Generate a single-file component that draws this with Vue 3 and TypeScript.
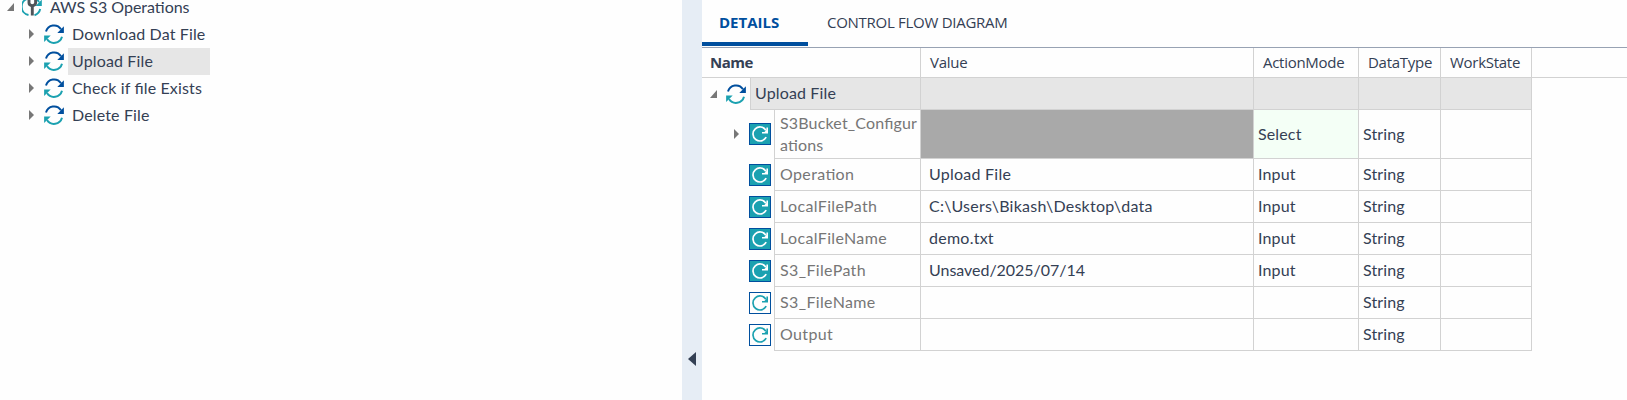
<script setup lang="ts">
interface Row {
  name: string
  value: string
  mode: string
  filled: boolean
  expandable?: boolean
}

const steps: string[] = ['Download Dat File', 'Upload File', 'Check if file Exists', 'Delete File']
const selected = 'Upload File'

const rows: Row[] = [
  { name: 'S3Bucket_Configurations', value: '', mode: 'Select', filled: true, expandable: true },
  { name: 'Operation', value: 'Upload File', mode: 'Input', filled: true },
  { name: 'LocalFilePath', value: 'C:\\Users\\Bikash\\Desktop\\data', mode: 'Input', filled: true },
  { name: 'LocalFileName', value: 'demo.txt', mode: 'Input', filled: true },
  { name: 'S3_FilePath', value: 'Unsaved/2025/07/14', mode: 'Input', filled: true },
  { name: 'S3_FileName', value: '', mode: '', filled: false },
  { name: 'Output', value: '', mode: '', filled: false },
]
</script>

<template>
  <svg class="defs" width="0" height="0" aria-hidden="true">
    <symbol id="sync" viewBox="0 0 20 20">
      <path d="M2 7.6A8.3 8.3 0 0 1 17 5.3" fill="none" stroke="#004f9e" stroke-width="2" />
      <path d="M19.9 2.2V9H13.3Z" fill="#004f9e" />
      <path d="M18 12.8A8.3 8.3 0 0 1 3 15" fill="none" stroke="#1ba1b0" stroke-width="2" />
      <path d="M0.1 18V11.4H6.7Z" fill="#1ba1b0" />
    </symbol>
    <symbol id="reload" viewBox="0 0 20 20">
      <path d="M15.9 6.2A7 7 0 1 0 16.2 13.2" fill="none" stroke="currentColor" stroke-width="1.7" />
      <path d="M18 3.6V9.4H12V8H14.4L16.4 6V3.6Z" fill="currentColor" />
    </symbol>
    <symbol id="closed" viewBox="0 0 5 10"><path d="M0 0L5 5L0 10Z" fill="#777" /></symbol>
    <symbol id="open" viewBox="0 0 7 8"><path d="M7 0V8H0Z" fill="#777" /></symbol>
  </svg>
  <main class="app">
    <aside class="tree">
      <div class="node root">
        <svg class="open"><use href="#open" /></svg>
        <svg class="tool" viewBox="0 0 20 20">
          <path d="M6 1.6A8.4 8.4 0 0 0 6.5 18" fill="none" stroke="#1ba1b0" stroke-width="2" />
          <path d="M12.5 18.2A8.6 8.6 0 0 0 18.2 12M13.5 1.6A9 9 0 0 1 17 5" fill="none" stroke="#1ba1b0" stroke-width="2" />
          <path d="M19.8 2.6V9H13.5Z" fill="#1ba1b0" />
          <path d="M7 2V6Q7 8 10.3 9Q13.6 8 13.6 6V2M10.3 8V18.5" fill="none" stroke="#505459" stroke-width="2.9" />
        </svg>
        <span class="label">AWS S3 Operations</span>
      </div>
      <div v-for="s in steps" :key="s" class="node">
        <svg class="closed"><use href="#closed" /></svg>
        <svg class="sync"><use href="#sync" /></svg>
        <span class="label" :class="{ selected: s === selected }">{{ s }}</span>
      </div>
    </aside>

    <div class="splitter">
      <svg width="8" height="14" viewBox="0 0 8 14"><path d="M8 0V14L0 7Z" fill="#344054" /></svg>
    </div>

    <section class="panel">
      <nav class="tabs">
        <span class="tab active">DETAILS</span>
        <span class="tab">CONTROL FLOW DIAGRAM</span>
      </nav>
      <div class="row head">
        <div class="cell name">Name</div>
        <div class="cell">Value</div>
        <div class="cell">ActionMode</div>
        <div class="cell">DataType</div>
        <div class="cell">WorkState</div>
        <div class="rest"></div>
      </div>
      <div class="row group">
        <div class="gutter">
          <svg class="open"><use href="#open" /></svg>
          <svg class="sync"><use href="#sync" /></svg>
        </div>
        <div class="cell title">Upload File</div>
        <div class="cell"></div>
        <div class="cell"></div>
        <div class="cell"></div>
        <div class="cell"></div>
      </div>
      <div v-for="r in rows" :key="r.name" class="row item" :class="{ tall: r.expandable }">
        <div class="gutter">
          <svg v-if="r.expandable" class="closed"><use href="#closed" /></svg>
          <svg class="badge" :class="{ filled: r.filled }"><use href="#reload" /></svg>
        </div>
        <div class="cell key">
          <span v-if="r.expandable">S3Bucket_Configur<br />ations</span>
          <span v-else>{{ r.name }}</span>
        </div>
        <div class="cell value" :class="{ dated: r.value.includes('/') }">{{ r.value }}</div>
        <div class="cell mode">{{ r.mode }}</div>
        <div class="cell type">String</div>
        <div class="cell"></div>
      </div>
    </section>
  </main>
</template>

<style>
body {
  margin: 0;
  background: #fefefe;
}
</style>

<style scoped>
.defs {
  position: absolute;
}
.app {
  display: flex;
  width: 1627px;
  height: 400px;
  overflow: hidden;
  background: #fefefe;
  color: #344054;
  font: 16px/22px Lato, "Open Sans", sans-serif;
  font-feature-settings: "liga" 1;
  letter-spacing: 0.14px;
  white-space: nowrap;
}
svg {
  display: block;
  flex: none;
}
.tree {
  width: 682px;
  margin-top: -6px;
}
.node {
  display: flex;
  align-items: center;
  height: 27px;
  padding-left: 29px;
}
.node.root {
  padding-left: 7px;
}
.closed {
  width: 5px;
  height: 10px;
}
.open {
  width: 7px;
  height: 8px;
}
.sync {
  width: 20px;
  height: 20px;
}
.node svg {
  margin-bottom: 1px;
}
.node .closed {
  margin-right: 10px;
}
.root .open {
  margin-right: 8px;
}
.tool {
  width: 20px;
  height: 20px;
}
.label {
  box-sizing: border-box;
  height: 27px;
  margin-left: 4px;
  padding-left: 4px;
  line-height: 25px;
}
.root .label {
  letter-spacing: -0.02px;
}
.selected {
  width: 142px;
  background: #e6e6e6;
}
.splitter {
  box-sizing: border-box;
  width: 20px;
  padding: 352px 0 0 6px;
  background: #e6edf5;
}
.panel {
  flex: 1;
}
.tabs {
  box-sizing: border-box;
  display: flex;
  height: 48px;
  border-bottom: 1px solid #98a2b3;
  font: 15px/44px "Open Sans", sans-serif;
  letter-spacing: -0.28px;
}
.tab {
  box-sizing: border-box;
  height: 46px;
  padding-left: 19px;
}
.tab.active {
  width: 106px;
  padding-left: 17px;
  border-bottom: 4px solid #004f9e;
  color: #004f9e;
  font-weight: 700;
  letter-spacing: 0;
}
.row {
  display: grid;
  grid-template-columns: 218px 333px 105px 82px 91px 1fr;
  height: 32px;
}
.cell {
  box-sizing: border-box;
  display: flex;
  align-items: center;
  border-left: 1px solid #d2d2d2;
  border-bottom: 1px solid #d2d2d2;
  padding: 0 0 2px 8px;
}
.cell:last-child {
  width: 92px;
  border-right: 1px solid #d2d2d2;
}
.head {
  height: 30px;
  font: 15px/20px "Open Sans", sans-serif;
  letter-spacing: -0.28px;
}
.head .cell {
  padding-left: 9px;
}
.head .name {
  border-left: 0;
  padding-left: 8px;
  font-weight: 700;
  letter-spacing: -0.5px;
}
.rest {
  border-left: 1px solid #d2d2d2;
  border-bottom: 1px solid #d2d2d2;
}
.gutter {
  box-sizing: border-box;
  display: flex;
  align-items: center;
  justify-content: flex-end;
}
.group {
  grid-template-columns: 48px 170px 333px 105px 82px 91px;
}
.group .cell {
  background: #e6e6e6;
}
.group .gutter {
  padding-right: 4px;
}
.group .open {
  margin-right: 9px;
}
.group .title {
  padding-left: 4px;
}
.item {
  grid-template-columns: 72px 146px 333px 105px 82px 91px;
}
.item .gutter {
  padding: 0 3px 1px 0;
}
.item .closed {
  margin-right: 10px;
}
.item .key {
  padding-left: 5px;
  color: #767676;
  letter-spacing: 0.36px;
}
.item .value {
  letter-spacing: 0.25px;
}
.item .value.dated {
  letter-spacing: -0.03px;
}
.item .mode,
.item .type {
  padding-left: 4px;
}
.tall {
  height: 49px;
}
.tall .cell {
  padding-bottom: 0;
}
.tall .key {
  letter-spacing: 0.16px;
}
.tall .value {
  background: #a9a9a9;
}
.tall .mode {
  background: #f4fff6;
}
.badge {
  box-sizing: border-box;
  width: 22px;
  height: 22px;
  border: 1px solid #004f9e;
  color: #1ba1b0;
}
.badge.filled {
  background: #1ba1b0;
  color: #fff;
}
</style>
